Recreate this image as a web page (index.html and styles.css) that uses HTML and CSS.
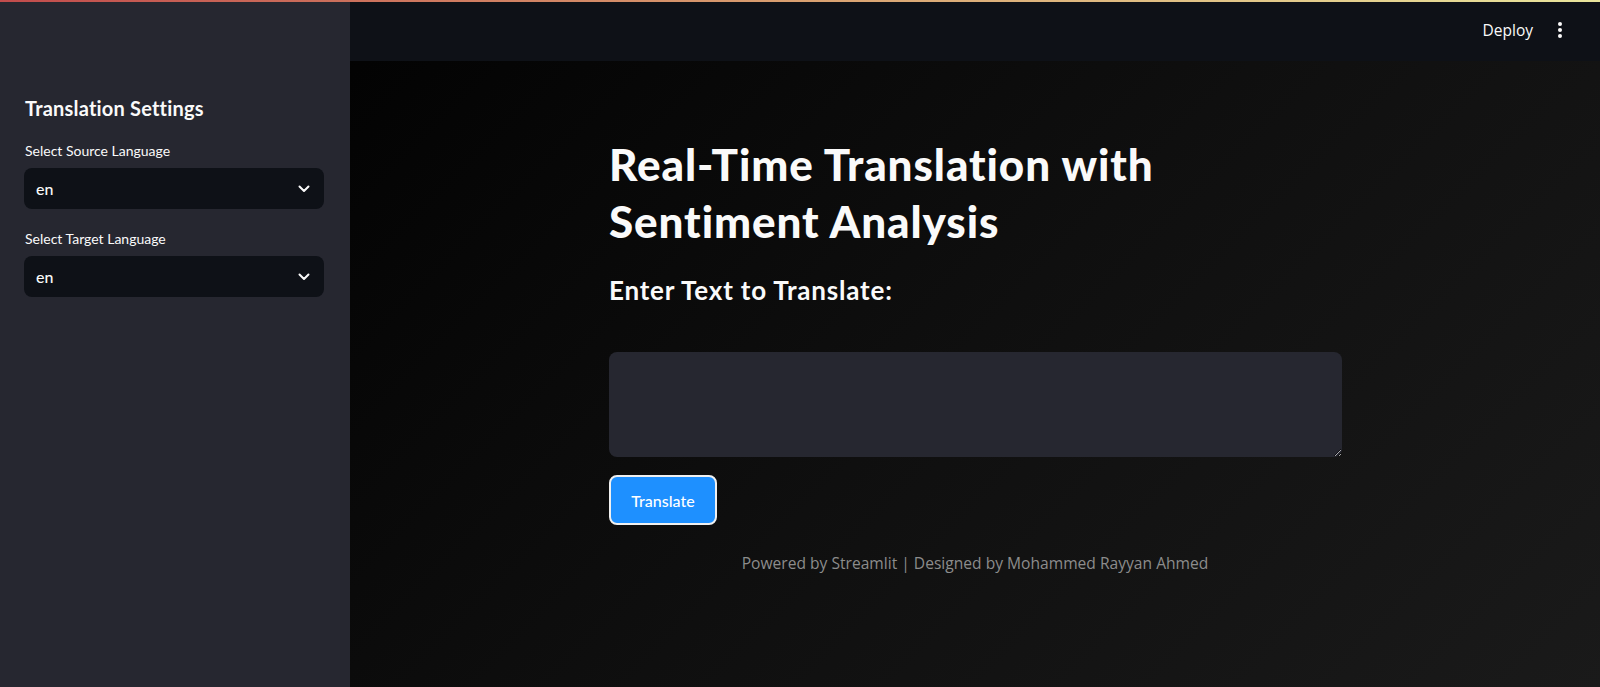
FILE: index.html
```html
<!DOCTYPE html>
<html lang="en">
<head>
<meta charset="utf-8">
<title>Real-Time Translation with Sentiment Analysis</title>
<link rel="stylesheet" href="styles.css">
</head>
<body>
<div class="decoration"></div>
<div class="app">
  <aside class="sidebar">
    <h2 class="side-title">Translation Settings</h2>
    <div class="field">
      <label class="field-label">Select Source Language</label>
      <div class="select">
        <span class="select-value">en</span>
        <svg class="chevron" width="12" height="8" viewBox="0 0 12 8"><polyline points="1.5,1.5 6,6 10.5,1.5" fill="none" stroke="#fafafa" stroke-width="2" stroke-linecap="round" stroke-linejoin="round"/></svg>
      </div>
    </div>
    <div class="field">
      <label class="field-label">Select Target Language</label>
      <div class="select">
        <span class="select-value">en</span>
        <svg class="chevron" width="12" height="8" viewBox="0 0 12 8"><polyline points="1.5,1.5 6,6 10.5,1.5" fill="none" stroke="#fafafa" stroke-width="2" stroke-linecap="round" stroke-linejoin="round"/></svg>
      </div>
    </div>
  </aside>
  <main class="main">
    <header class="topbar">
      <span class="deploy">Deploy</span>
      <span class="kebab"><i></i><i></i><i></i></span>
    </header>
    <section class="content">
      <div class="block">
        <h1 class="title">Real-Time Translation with Sentiment Analysis</h1>
        <h3 class="subheader">Enter Text to Translate:</h3>
        <textarea class="textbox"></textarea>
        <button class="btn">Translate</button>
        <p class="footer">Powered by Streamlit | Designed by Mohammed Rayyan Ahmed</p>
      </div>
    </section>
  </main>
</div>
</body>
</html>
```

FILE: styles.css
```css
* { box-sizing: border-box; }
html, body { margin: 0; padding: 0; height: 100%; }
body {
  font-family: Lato, "Noto Sans", sans-serif;
  color: #fafafa;
  background: #0e1117;
  overflow: hidden;
}
.decoration {
  position: absolute;
  top: 0; left: 0; right: 0;
  height: 2px;
  background: linear-gradient(90deg, #c24c4c 0%, #d9a070 50%, #e9e59c 100%);
  z-index: 5;
}
.app { display: flex; height: 687px; }
.sidebar {
  width: 350px;
  flex: none;
  background: #262730;
  padding: 96px 26px 0 24px;
  display: flex;
  flex-direction: column;
}
.side-title {
  margin: 0 0 21px 1px;
  font-size: 20px;
  line-height: 24px;
  font-weight: 700;
  letter-spacing: 0.2px;
  color: #fafafa;
}
.field { display: flex; flex-direction: column; margin-bottom: 20px; }
.field-label {
  font-size: 14px;
  line-height: 20px;
  margin-bottom: 7px;
  margin-left: 1px;
  color: #fafafa;
}
.select {
  height: 41px;
  background: #0e1117;
  border-radius: 8px;
  display: flex;
  align-items: center;
  justify-content: space-between;
  padding: 0 14px 0 12px;
}
.select-value { font-size: 16px; font-weight: 500; color: #fafafa; }
.chevron { display: block; }
.main {
  flex: 1;
  display: flex;
  flex-direction: column;
  background: linear-gradient(135deg, #020202 0%, #0f0f0f 50%, #1a1a1a 100%);
}
.topbar {
  height: 61px;
  flex: none;
  background: #0e1117;
  display: flex;
  align-items: center;
  justify-content: flex-end;
  padding: 0 38px 0 0;
  gap: 25px;
}
.deploy {
  font-family: "Open Sans", sans-serif;
  font-size: 15.5px;
  color: #fafafa;
  margin-top: -2px;
}
.kebab {
  display: flex;
  flex-direction: column;
  gap: 2px;
  margin-top: -2px;
}
.kebab i {
  display: block;
  width: 4px;
  height: 4px;
  border-radius: 50%;
  background: #fafafa;
}
.content { flex: 1; display: flex; justify-content: center; }
.block {
  width: 732px;
  padding-top: 75px;
  display: flex;
  flex-direction: column;
  align-items: flex-start;
}
.title {
  margin: 0;
  font-size: 44px;
  line-height: 57px;
  font-weight: 900;
  letter-spacing: 0.9px;
  color: #fafafa;
  max-width: 640px;
}
.subheader {
  margin: 22px 0 0 0;
  font-size: 26px;
  line-height: 36px;
  font-weight: 700;
  letter-spacing: 0.8px;
  color: #fafafa;
}
.textbox {
  margin-top: 44px;
  width: 733px;
  height: 105px;
  background: #262730;
  border: none;
  border-radius: 8px;
  resize: vertical;
  outline: none;
  color: #fafafa;
  font-family: inherit;
  font-size: 16px;
  padding: 12px 16px;
}
.btn {
  margin-top: 18px;
  width: 108px;
  height: 50px;
  background: #1e90ff;
  border: 2px solid #f0f0f0;
  border-radius: 8px;
  color: #ffffff;
  font-family: Lato, sans-serif;
  font-size: 16px;
  font-weight: 500;
  cursor: pointer;
}
.footer {
  align-self: stretch;
  text-align: center;
  margin: 27px 0 0 0;
  font-family: "Open Sans", sans-serif;
  font-size: 15.6px;
  line-height: 22px;
  color: #8c8c8c;
}
```
